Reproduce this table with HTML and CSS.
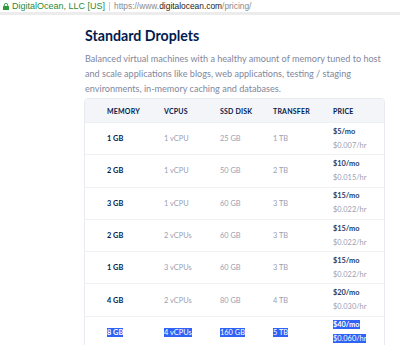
FILE: index.html
```html
<!DOCTYPE html>
<html lang="en">
<head>
  <meta charset="UTF-8" />
  <title>Pricing - DigitalOcean</title>
  <link rel="stylesheet" href="styles.css">
</head>
<body>

  <div class="urlbar">
    <svg class="lock" width="6" height="7" viewBox="0 0 6 7">
      <rect x="0" y="3" width="6" height="4" rx="0.5" fill="#2c9a3a"/>
      <path d="M1.3 3.2V2.1a1.7 1.7 0 0 1 3.4 0v1.1" fill="none" stroke="#2c9a3a" stroke-width="0.9"/>
    </svg>
    <span class="org">DigitalOcean, LLC [US]</span>
    <span class="sep"></span>
    <span class="url">https://www.<b>digitalocean.com</b>/pricing/</span>
  </div>

  <div class="content">
    <h2>Standard Droplets</h2>
    <p class="intro">Balanced virtual machines with a healthy amount of memory tuned to host and scale applications like blogs, web applications, testing / staging environments, in-memory caching and databases.</p>

    <div class="card">
      <table class="plans">
        <thead>
          <tr>
            <th class="c-mem">Memory</th>
            <th class="c-cpu">vCPUs</th>
            <th class="c-disk">SSD Disk</th>
            <th class="c-tr">Transfer</th>
            <th class="c-price">Price</th>
          </tr>
        </thead>
        <tbody>
          <tr>
            <td class="mem">1 GB</td><td>1 vCPU</td><td>25 GB</td><td>1 TB</td>
            <td class="price"><strong>$5/mo</strong><span>$0.007/hr</span></td>
          </tr>
          <tr>
            <td class="mem">2 GB</td><td>1 vCPU</td><td>50 GB</td><td>2 TB</td>
            <td class="price"><strong>$10/mo</strong><span>$0.015/hr</span></td>
          </tr>
          <tr>
            <td class="mem">3 GB</td><td>1 vCPU</td><td>60 GB</td><td>3 TB</td>
            <td class="price"><strong>$15/mo</strong><span>$0.022/hr</span></td>
          </tr>
          <tr>
            <td class="mem">2 GB</td><td>2 vCPUs</td><td>60 GB</td><td>3 TB</td>
            <td class="price"><strong>$15/mo</strong><span>$0.022/hr</span></td>
          </tr>
          <tr>
            <td class="mem">1 GB</td><td>3 vCPUs</td><td>60 GB</td><td>3 TB</td>
            <td class="price"><strong>$15/mo</strong><span>$0.022/hr</span></td>
          </tr>
          <tr>
            <td class="mem">4 GB</td><td>2 vCPUs</td><td>80 GB</td><td>4 TB</td>
            <td class="price"><strong>$20/mo</strong><span>$0.030/hr</span></td>
          </tr>
          <tr class="selected">
            <td class="mem"><mark>8 GB</mark></td><td><mark>4 vCPUs</mark></td><td><mark>160 GB</mark></td><td><mark>5 TB</mark></td>
            <td class="price"><strong><mark>$40/mo</mark></strong><span><mark>$0.060/hr</mark></span></td>
          </tr>
        </tbody>
      </table>
    </div>
  </div>

</body>
</html>
```

FILE: styles.css
```css
body {
  margin: 0;
  font-family: 'Lato', 'Liberation Sans', sans-serif;
  background: #fff;
  color: #031b4e;
  overflow: hidden;
}

.urlbar {
  display: flex;
  align-items: center;
  height: 12px;
  padding-left: 3px;
  font-family: 'Liberation Sans', Arial, sans-serif;
  font-size: 9px;
  border-bottom: 3px solid #ececec;
}

.lock {
  margin-right: 3px;
}

.org {
  color: #2c8a36;
}

.sep {
  width: 1px;
  height: 9px;
  background: #d0d0d0;
  margin: 0 4px;
}

.url {
  font-size: 8.4px;
  color: #8a8a8a;
}

.url b {
  font-weight: normal;
  color: #222;
}

.content {
  width: 301px;
  margin-left: 84px;
  padding-top: 12px;
}

h2 {
  margin: 0 0 0 1px;
  font-size: 14.2px;
  font-weight: 700;
  line-height: 18px;
  color: #031b4e;
}

.intro {
  margin: 6px 0 0 1px;
  font-size: 9.1px;
  line-height: 15px;
  color: #7f879e;
}

.card {
  margin-top: 2px;
  border: 1px solid #e7eaf0;
  border-radius: 4px;
  overflow: hidden;
}

.plans {
  width: 100%;
  border-collapse: collapse;
  table-layout: fixed;
}

.plans th {
  height: 23px;
  background: #f3f5f9;
  text-align: left;
  font-size: 7px;
  font-weight: 700;
  letter-spacing: 0.2px;
  text-transform: uppercase;
  color: #031b4e;
  padding: 0;
}

.plans th.c-mem { width: 57px; padding-left: 22px; }
.c-cpu { width: 56px; }
.c-disk { width: 53px; }
.c-tr { width: 60px; }

.plans td {
  height: 31.3px;
  border-top: 1px solid #eef0f4;
  padding: 0;
  font-size: 7.4px;
  color: #9aa0b3;
  vertical-align: middle;
}

.plans td.mem {
  padding-left: 22px;
  font-weight: 700;
  color: #031b4e;
}

.price strong {
  display: block;
  line-height: 14px;
  color: #273c6a;
}

.price span {
  display: block;
  line-height: 14px;
  color: #9aa0b3;
}

mark {
  background: #2f62f5;
  color: #fff;
}
```
